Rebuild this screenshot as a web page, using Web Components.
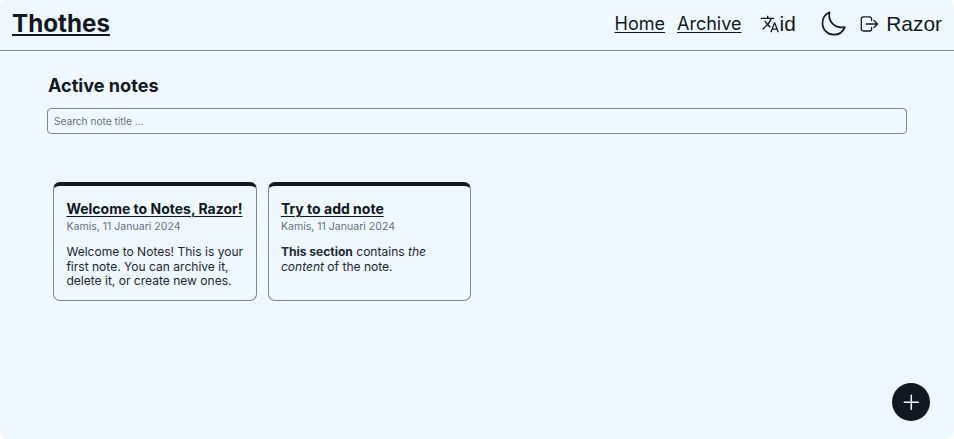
<!DOCTYPE html>
<html lang="id">
<head>
<meta charset="utf-8">
<title>Thothes</title>
<style>
html{background:#fff}
body{margin:0;font-family:Inter,"Liberation Sans",sans-serif;color:#111821;--ink:#111821;--line:#7e8690;--muted:#65707b;--bg:#f0f8ff}
</style>
</head>
<body>
<notes-app></notes-app>
<script>
const define=(name,html)=>customElements.define(name,class extends HTMLElement{
  constructor(){super();const t=document.createElement('template');t.innerHTML=html;this.attachShadow({mode:'open'}).append(t.content.cloneNode(true));}
});

define('nav-link',`<style>
:host{display:block}
a{color:inherit;font-size:18px;line-height:24px;text-decoration:underline;text-decoration-thickness:1px;text-underline-offset:2px;white-space:nowrap}
</style><a><slot></slot></a>`);

define('icon-button',`<style>
:host{display:flex}
button{display:flex;align-items:center;gap:var(--gap,0px);margin:0;padding:0;border:0;background:none;color:inherit;font:20.9px/24px "Liberation Sans",Arial,sans-serif;white-space:nowrap}
</style><button><slot name="icon"></slot><slot></slot></button>`);

define('app-header',`<style>
:host{display:flex;align-items:center;box-sizing:border-box;height:51px;padding:0 12px;border-bottom:1px solid var(--line)}
h1{margin:0 auto 3px 0;font-size:24.2px;line-height:32px;font-weight:700;text-decoration:underline;text-decoration-thickness:2px;text-underline-offset:2px}
nav{display:flex;align-items:center;height:24px;margin-bottom:2px}
nav-link+nav-link{margin-left:12px}
.lang{margin-left:18px}.theme{margin-left:25.5px}.user{margin-left:13px;--gap:7px}
svg{display:block;fill:none;stroke:currentColor}
</style>
<h1>Thothes</h1>
<nav>
<nav-link>Home</nav-link><nav-link>Archive</nav-link>
<icon-button class="lang"><svg slot="icon" width="20" height="20" viewBox="0 0 24 24"><path fill="currentColor" stroke="none" d="M12.87 15.07l-2.54-2.51.03-.03A17.5 17.5 0 0 0 14.07 6H17V4.4h-7V2H8.4v2.4H1V6h11.17A15.6 15.6 0 0 1 9 11.35 15.7 15.7 0 0 1 6.69 8H5a17.6 17.6 0 0 0 2.98 4.56l-5.4 5.32L3.7 19l5.3-5.3 3.11 3.11.76-1.74zM18.2 10h-1.4L12.3 22H14l1.12-3h4.75L21 22h1.7l-4.5-12zm-2.52 7.4l1.82-5L19.32 17.4h-3.64z"/></svg>id</icon-button>
<icon-button class="theme"><svg slot="icon" width="26" height="26" viewBox="0 0 26 26" stroke-width="1.7" stroke-linejoin="round"><path d="M8.5 1.3C6.8 10 13.2 17.7 23.8 16.1C22 20.8 17.8 23.7 12.9 23.7C6.6 23.7 1.5 18.7 1.5 12.3C1.5 7.3 4.2 3.2 8.5 1.3Z"/></svg></icon-button>
<icon-button class="user"><svg slot="icon" width="19" height="16" viewBox="0 0 19 16" stroke-width="1.3" stroke-linecap="round" stroke-linejoin="round"><path d="M11.6 4.5V3A2.1 2.1 0 0 0 9.5.9H3.4A2.1 2.1 0 0 0 1.3 3v9.9A2.1 2.1 0 0 0 3.4 15h6.1a2.1 2.1 0 0 0 2.1-2.1v-1.5M6.3 8h11.2M14 4.5L17.5 8 14 11.5"/></svg>Razor</icon-button>
</nav>`);

define('search-field',`<style>
:host{display:block}
input{display:block;box-sizing:border-box;width:100%;height:26px;margin:0;padding:0 6px;border:1px solid var(--line);border-radius:4px;background:none;color:inherit;font:10.15px/14px Inter,"Liberation Sans",sans-serif}
input::placeholder{color:var(--muted);opacity:1}
</style><input placeholder="Search note title ...">`);

define('note-card',`<style>
:host{display:block;box-sizing:border-box;width:203.5px;height:119.5px;padding:13.5px 12.4px 0;border:1px solid var(--line);border-top:4px solid var(--ink);border-radius:7px}
h3{margin:0;font-size:14px;line-height:20px;font-weight:700;white-space:nowrap;text-decoration:underline;text-decoration-thickness:1px;text-underline-offset:2px}
time{display:block;font-size:10.55px;line-height:16px;color:var(--muted)}
p{margin:10px 0 0;font-size:12.05px;line-height:14.5px;color:#20272f;white-space:nowrap}
</style><h3><slot name="title"></slot></h3><time><slot name="date"></slot></time><p><slot></slot></p>`);

define('add-button',`<style>
:host{display:block;position:absolute;right:24px;bottom:18px}
button{display:grid;place-items:center;width:38px;height:38px;padding:0;border:0;border-radius:50%;background:var(--ink)}
</style><button aria-label="Add"><svg width="16" height="16" viewBox="0 0 16 16" stroke="#f0f8ff" stroke-width="1.5" stroke-linecap="round"><path d="M8.3 1.3v14M1.3 8.3h14"/></svg></button>`);

define('notes-app',`<style>
:host{display:block;position:relative;height:439px;overflow:hidden;background:var(--bg);border-radius:7px}
main{padding:21px 47px 0}
h2{margin:0 0 10px;padding-left:1px;font-size:18.1px;line-height:26px;font-weight:700}
.grid{display:flex;gap:11px;margin:47.5px 6px 0}
</style>
<app-header></app-header>
<main><h2>Active notes</h2><search-field></search-field>
<div class="grid">
<note-card><span slot="title">Welcome to Notes, Razor!</span><span slot="date">Kamis, 11 Januari 2024</span>Welcome to Notes! This is your<br>first note. You can archive it,<br>delete it, or create new ones.</note-card>
<note-card><span slot="title">Try to add note</span><span slot="date">Kamis, 11 Januari 2024</span><b>This section</b> contains <i>the<br>content</i> of the note.</note-card>
</div></main>
<add-button></add-button>`);
</script>
</body>
</html>
